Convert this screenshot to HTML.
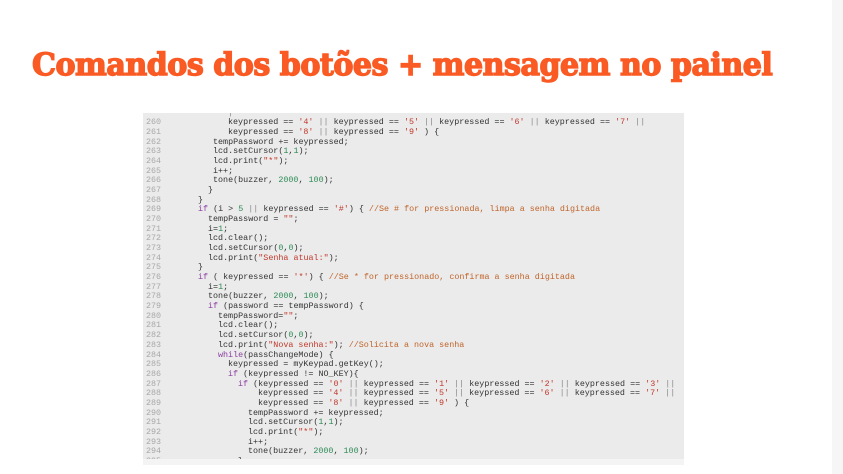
<!DOCTYPE html>
<html><head><meta charset="utf-8"><style>
html,body{margin:0;padding:0;width:843px;height:474px;overflow:hidden;background:#fff;}
.title{position:absolute;left:32px;top:47px;font-family:"DejaVu Serif","Liberation Serif",serif;font-weight:900;font-size:31px;color:#fa5a23;white-space:nowrap;transform-origin:0 0;transform:scaleX(0.97);letter-spacing:-0.5px;-webkit-text-stroke:1.4px #fa5a23;}
.strip{position:absolute;left:832px;top:0;width:11px;height:474px;background:#f6f6f7;}
.box{position:absolute;left:143px;top:113px;width:541px;height:346px;background:#ebebeb;overflow:hidden;}
.foot{position:absolute;left:143px;top:459px;width:541px;height:6px;background:#f4f4f4;}
.ln,.cd{position:absolute;font-family:"Liberation Mono",monospace;font-size:8.4px;line-height:9.68px;white-space:pre;color:#333;}
.ln{left:3px;color:#a8a8a8;}
.s{color:#c0392b}.n{color:#2e8b57}.c{color:#c0642a}.k{color:#8a3fa0}.p{color:#888}
</style></head><body>
<div class="title">Comandos dos botões + mensagem no painel</div>
<div class="strip"></div>
<div class="box" id="b"></div>
<div class="foot"></div>
<script>
var L=[
[0,85,'<span class="p">|</span>'],
[260,85,'keypressed == <span class="s">\'4\'</span> <span class="p">||</span> keypressed == <span class="s">\'5\'</span> <span class="p">||</span> keypressed == <span class="s">\'6\'</span> <span class="p">||</span> keypressed == <span class="s">\'7\'</span> <span class="p">||</span>'],
[261,85,'keypressed == <span class="s">\'8\'</span> <span class="p">||</span> keypressed == <span class="s">\'9\'</span> ) {'],
[262,70,'tempPassword += keypressed;'],
[263,70,'lcd.setCursor(<span class="n">1</span>,<span class="n">1</span>);'],
[264,70,'lcd.print(<span class="s">"*"</span>);'],
[265,70,'i++;'],
[266,70,'tone(buzzer, <span class="n">2000</span>, <span class="n">100</span>);'],
[267,65,'}'],
[268,55,'}'],
[269,55,'<span class="k">if</span> (i &gt; <span class="n">5</span> <span class="p">||</span> keypressed == <span class="s">\'#\'</span>) { <span class="c">//Se # for pressionada, limpa a senha digitada</span>'],
[270,65,'tempPassword = <span class="s">""</span>;'],
[271,65,'i=<span class="n">1</span>;'],
[272,65,'lcd.clear();'],
[273,65,'lcd.setCursor(<span class="n">0</span>,<span class="n">0</span>);'],
[274,65,'lcd.print(<span class="s">"Senha atual:"</span>);'],
[275,55,'}'],
[276,55,'<span class="k">if</span> ( keypressed == <span class="s">\'*\'</span>) { <span class="c">//Se * for pressionado, confirma a senha digitada</span>'],
[277,65,'i=<span class="n">1</span>;'],
[278,65,'tone(buzzer, <span class="n">2000</span>, <span class="n">100</span>);'],
[279,65,'<span class="k">if</span> (password == tempPassword) {'],
[280,75,'tempPassword=<span class="s">""</span>;'],
[281,75,'lcd.clear();'],
[282,75,'lcd.setCursor(<span class="n">0</span>,<span class="n">0</span>);'],
[283,75,'lcd.print(<span class="s">"Nova senha:"</span>); <span class="c">//Solicita a nova senha</span>'],
[284,75,'<span class="k">while</span>(passChangeMode) {'],
[285,85,'keypressed = myKeypad.getKey();'],
[286,85,'<span class="k">if</span> (keypressed != NO_KEY){'],
[287,95,'<span class="k">if</span> (keypressed == <span class="s">\'0\'</span> <span class="p">||</span> keypressed == <span class="s">\'1\'</span> <span class="p">||</span> keypressed == <span class="s">\'2\'</span> <span class="p">||</span> keypressed == <span class="s">\'3\'</span> <span class="p">||</span>'],
[288,115,'keypressed == <span class="s">\'4\'</span> <span class="p">||</span> keypressed == <span class="s">\'5\'</span> <span class="p">||</span> keypressed == <span class="s">\'6\'</span> <span class="p">||</span> keypressed == <span class="s">\'7\'</span> <span class="p">||</span>'],
[289,115,'keypressed == <span class="s">\'8\'</span> <span class="p">||</span> keypressed == <span class="s">\'9\'</span> ) {'],
[290,105,'tempPassword += keypressed;'],
[291,105,'lcd.setCursor(<span class="n">1</span>,<span class="n">1</span>);'],
[292,105,'lcd.print(<span class="s">"*"</span>);'],
[293,105,'i++;'],
[294,105,'tone(buzzer, <span class="n">2000</span>, <span class="n">100</span>);'],
[295,95,'}']
];
var h='';
for(var i=0;i<L.length;i++){
 var t=-4.5+i*9.68;
 if(L[i][0])h+='<div class="ln" style="top:'+t+'px">'+L[i][0]+'</div>';
 h+='<div class="cd" style="top:'+t+'px;left:'+L[i][1]+'px">'+L[i][2]+'</div>';
}
document.getElementById('b').innerHTML=h;
</script>
</body></html>
